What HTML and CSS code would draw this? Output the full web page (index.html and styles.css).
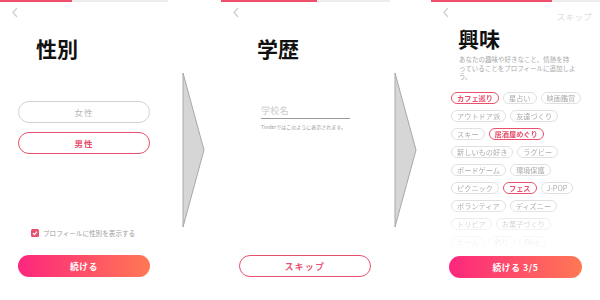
FILE: index.html
```html
<!DOCTYPE html>
<html lang="ja">
<head>
<meta charset="utf-8">
<link rel="stylesheet" href="styles.css">
</head>
<body>
<div class="page">
  <section class="screen s1">
    <div class="progress"><div class="fill f1"></div></div>
    <div class="topbar">
      <svg class="chev" width="6" height="11" viewBox="0 0 6 11"><polyline points="5,1 1,5.5 5,10" fill="none" stroke="#cfcfcf" stroke-width="1.3"/></svg>
    </div>
    <h1 class="title">性別</h1>
    <div class="choices">
      <div class="choice">女性</div>
      <div class="choice active">男性</div>
    </div>
    <div class="bottom">
      <div class="check-row">
        <span class="checkbox"><svg width="8" height="8" viewBox="0 0 8 8"><polyline points="2,4.2 3.4,5.6 6,2.6" fill="none" stroke="#fff" stroke-width="1.2"/></svg></span>
        <span class="check-label">プロフィールに性別を表示する</span>
      </div>
      <div class="btn primary">続ける</div>
    </div>
  </section>

  <div class="arrow-col a1">
    <svg width="23" height="156" viewBox="0 0 23 156"><polygon points="1,1 22,78 1,155" fill="#d6d6d6" stroke="#a8a8a8" stroke-width="1"/></svg>
  </div>

  <section class="screen s2">
    <div class="progress"><div class="fill f2"></div></div>
    <div class="topbar">
      <svg class="chev" width="6" height="11" viewBox="0 0 6 11"><polyline points="5,1 1,5.5 5,10" fill="none" stroke="#cfcfcf" stroke-width="1.3"/></svg>
    </div>
    <h1 class="title">学歴</h1>
    <div class="field">
      <div class="input">学校名</div>
      <div class="hint">Tinderではこのように表示されます。</div>
    </div>
    <div class="bottom">
      <div class="btn outline">スキップ</div>
    </div>
  </section>

  <div class="arrow-col a2">
    <svg width="23" height="156" viewBox="0 0 23 156"><polygon points="1,1 22,78 1,155" fill="#d6d6d6" stroke="#a8a8a8" stroke-width="1"/></svg>
  </div>

  <section class="screen s3">
    <div class="progress"><div class="fill f3"></div></div>
    <div class="topbar">
      <svg class="chev" width="6" height="11" viewBox="0 0 6 11"><polyline points="5,1 1,5.5 5,10" fill="none" stroke="#cfcfcf" stroke-width="1.3"/></svg>
      <span class="skip-top">スキップ</span>
    </div>
    <h1 class="title t3">興味</h1>
    <p class="desc">あなたの趣味や好きなこと、情熱を持<br>っていることをプロフィールに追加しよ<br>う。</p>
    <div class="chips">
      <div class="chip-row"><span class="chip on">カフェ巡り</span><span class="chip">星占い</span><span class="chip">映画鑑賞</span></div>
      <div class="chip-row"><span class="chip">アウトドア派</span><span class="chip">友達づくり</span></div>
      <div class="chip-row"><span class="chip">スキー</span><span class="chip on">居酒屋めぐり</span></div>
      <div class="chip-row"><span class="chip">新しいもの好き</span><span class="chip">ラグビー</span></div>
      <div class="chip-row"><span class="chip">ボードゲーム</span><span class="chip">環境保護</span></div>
      <div class="chip-row"><span class="chip">ピクニック</span><span class="chip on">フェス</span><span class="chip">J-POP</span></div>
      <div class="chip-row"><span class="chip">ボランティア</span><span class="chip">ディズニー</span></div>
      <div class="chip-row"><span class="chip">トリビア</span><span class="chip">お菓子づくり</span></div>
      <div class="chip-row"><span class="chip">ゲーム</span><span class="chip">釣り</span><span class="chip">Blog</span></div>
    </div>
    <div class="btn primary b3">続ける 3/5</div>
  </section>
</div>
</body>
</html>
```

FILE: styles.css
```css
* { box-sizing: border-box; }
html, body { margin: 0; padding: 0; background: #fff; }
body {
  font-family: "Noto Sans CJK JP", "Noto Sans", sans-serif;
  width: 600px;
  height: 300px;
  overflow: hidden;
}
.page { display: flex; width: 600px; height: 300px; }

.screen {
  display: flex;
  flex-direction: column;
  height: 300px;
  flex: none;
}
.s1 { width: 168px; }
.s2 { width: 169px; }
.s3 { width: 169px; }

.progress { height: 2px; background: #ededed; display: flex; flex: none; }
.fill { height: 2px; background: #ee4f6b; }
.f1 { width: 72px; }
.f2 { width: 96px; }
.f3 { width: 121px; }

.topbar {
  height: 21px;
  flex: none;
  display: flex;
  align-items: center;
  justify-content: space-between;
  padding-left: 12px;
  padding-right: 8px;
}
.chev { display: block; }
.skip-top {
  font-size: 8.5px;
  color: #dcdcdc;
  margin-top: 7px;
  letter-spacing: 0.3px;
}

.title {
  margin: 13px 0 0 0;
  padding-left: 36px;
  font-size: 21px;
  line-height: 24px;
  font-weight: 700;
  color: #111;
}
.t3 { margin-top: 3px; padding-left: 27px; }

.choices {
  margin: 41px 18px 0 18px;
  display: flex;
  flex-direction: column;
  gap: 9px;
}
.choice {
  height: 22px;
  border: 1px solid #d2d2d2;
  border-radius: 11px;
  display: flex;
  align-items: center;
  justify-content: center;
  font-size: 8.5px;
  letter-spacing: 1px;
  color: #b9b9b9;
}
.choice.active {
  border: 1.3px solid #e9506d;
  color: #e9506d;
  font-weight: 700;
}

.bottom {
  margin-top: auto;
  padding: 0 18px 23px 18px;
  display: flex;
  flex-direction: column;
}
.s2 .bottom { padding-right: 19px; }

.check-row {
  display: flex;
  align-items: center;
  gap: 4px;
  padding-left: 13px;
  height: 10px;
  margin-bottom: 17px;
}
.checkbox {
  width: 8px;
  height: 8px;
  border-radius: 1.5px;
  background: #e9506d;
  display: flex;
}
.checkbox svg { display: block; }
.check-label {
  font-size: 6.6px;
  color: #a0a0a0;
  line-height: 10px;
}

.btn {
  height: 22px;
  border-radius: 11px;
  display: flex;
  align-items: center;
  justify-content: center;
  font-size: 8.7px;
  font-weight: 700;
  letter-spacing: 0.6px;
}
.primary {
  background: linear-gradient(90deg, #fd267d 0%, #ff7854 100%);
  color: #fff;
}
.outline {
  border: 1.3px solid #e9506d;
  color: #e9506d;
  letter-spacing: 1.5px;
}
.b3 { margin: 4px 18px 0 18px; flex: none; }

.arrow-col { flex: none; height: 300px; padding-top: 72px; }
.arrow-col svg { display: block; }
.a1 { width: 53px; padding-left: 14px; }
.a2 { width: 41px; padding-left: 4px; }

.field {
  margin: 44px 40px 0 40px;
}
.input {
  height: 15px;
  font-size: 9px;
  line-height: 14px;
  color: #cacaca;
  border-bottom: 1px solid #9a9a9a;
  letter-spacing: 0.3px;
}
.hint {
  margin-top: 4px;
  font-size: 5px;
  line-height: 7px;
  color: #9a9a9a;
  white-space: nowrap;
}

.desc {
  margin: 5px 0 0 0;
  padding-left: 28px;
  font-size: 6.5px;
  line-height: 8.5px;
  color: #a8a8a8;
  white-space: nowrap;
}

.chips {
  margin-top: 11.5px;
  height: 160px;
  overflow: hidden;
  padding-left: 20px;
  display: flex;
  flex-direction: column;
  gap: 6px;
  flex: none;
  -webkit-mask-image: linear-gradient(to bottom, #000 0px, #000 114px, rgba(0,0,0,0.45) 134px, rgba(0,0,0,0) 160px);
  mask-image: linear-gradient(to bottom, #000 0px, #000 114px, rgba(0,0,0,0.45) 134px, rgba(0,0,0,0) 160px);
}
.chip-row { display: flex; gap: 4px; flex: none; }
.chip {
  height: 12px;
  border: 1px solid #e0e0e0;
  border-radius: 6px;
  padding: 0 5px;
  font-size: 7.2px;
  line-height: 10px;
  color: #adadad;
  white-space: nowrap;
  display: flex;
  align-items: center;
}
.chip.on {
  border: 1.4px solid #e9506d;
  color: #e9506d;
  font-weight: 700;
}
```
